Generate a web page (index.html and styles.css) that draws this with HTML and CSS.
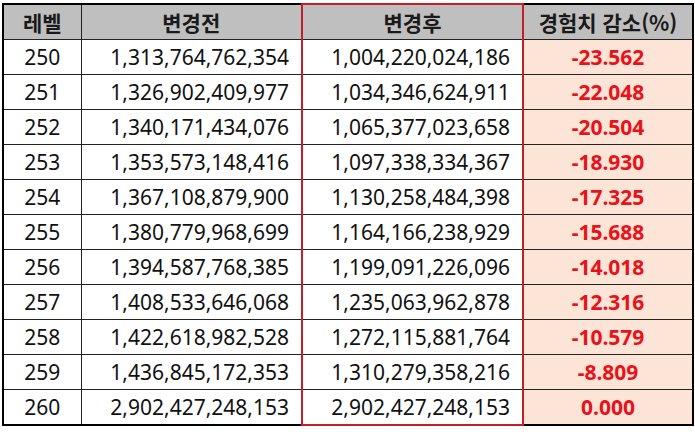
FILE: index.html
```html
<!DOCTYPE html>
<html lang="ko">
<head>
<meta charset="utf-8">
<link rel="stylesheet" href="styles.css">
</head>
<body>
<table class="exp">
  <colgroup>
    <col class="w-lv">
    <col class="w-num">
    <col class="w-num">
    <col class="w-diff">
  </colgroup>
  <thead>
    <tr>
      <th class="c-lv">레벨</th>
      <th class="c-before">변경전</th>
      <th class="c-after">변경후</th>
      <th class="c-diff">경험치 감소(%)</th>
    </tr>
  </thead>
  <tbody>
    <tr><td class="c-lv">250</td><td class="c-before">1,313,764,762,354</td><td class="c-after">1,004,220,024,186</td><td class="c-diff">-23.562</td></tr>
    <tr><td class="c-lv">251</td><td class="c-before">1,326,902,409,977</td><td class="c-after">1,034,346,624,911</td><td class="c-diff">-22.048</td></tr>
    <tr><td class="c-lv">252</td><td class="c-before">1,340,171,434,076</td><td class="c-after">1,065,377,023,658</td><td class="c-diff">-20.504</td></tr>
    <tr><td class="c-lv">253</td><td class="c-before">1,353,573,148,416</td><td class="c-after">1,097,338,334,367</td><td class="c-diff">-18.930</td></tr>
    <tr><td class="c-lv">254</td><td class="c-before">1,367,108,879,900</td><td class="c-after">1,130,258,484,398</td><td class="c-diff">-17.325</td></tr>
    <tr><td class="c-lv">255</td><td class="c-before">1,380,779,968,699</td><td class="c-after">1,164,166,238,929</td><td class="c-diff">-15.688</td></tr>
    <tr><td class="c-lv">256</td><td class="c-before">1,394,587,768,385</td><td class="c-after">1,199,091,226,096</td><td class="c-diff">-14.018</td></tr>
    <tr><td class="c-lv">257</td><td class="c-before">1,408,533,646,068</td><td class="c-after">1,235,063,962,878</td><td class="c-diff">-12.316</td></tr>
    <tr><td class="c-lv">258</td><td class="c-before">1,422,618,982,528</td><td class="c-after">1,272,115,881,764</td><td class="c-diff">-10.579</td></tr>
    <tr><td class="c-lv">259</td><td class="c-before">1,436,845,172,353</td><td class="c-after">1,310,279,358,216</td><td class="c-diff">-8.809</td></tr>
    <tr class="last"><td class="c-lv">260</td><td class="c-before">2,902,427,248,153</td><td class="c-after">2,902,427,248,153</td><td class="c-diff">0.000</td></tr>
  </tbody>
</table>
</body>
</html>
```
FILE: styles.css
```css
html, body {
  margin: 0;
  padding: 0;
  background: #ffffff;
}

body {
  padding: 3px 0 0 2px;
}

.exp {
  border-collapse: collapse;
  border: 2px solid #000;
  width: 690px;
  table-layout: fixed;
  font-family: "Noto Sans", "Noto Sans CJK KR", sans-serif;
  font-size: 21px;
  color: #111;
}

.w-lv { width: 78px; }
.w-num { width: 221px; }
.w-diff { width: 170px; }

.exp th,
.exp td {
  border: 1px solid #222;
  height: 34px;
  padding: 0 12px;
  line-height: 1;
  white-space: nowrap;
  overflow: visible;
}

.exp th {
  background: #bfbfbf;
  font-family: "Noto Sans CJK KR", "Noto Sans", sans-serif;
  font-weight: 700;
  font-size: 21px;
  text-align: center;
  color: #1a1a1a;
  border-bottom: 1px solid #222;
}

.exp td.c-lv {
  text-align: center;
}

.exp td.c-before,
.exp td.c-after {
  text-align: right;
}

.exp .c-after {
  border-left: 2px solid #c41e26;
  border-right: 2px solid #c41e26;
}

.exp th.c-after {
  border-top: 2px solid #c41e26;
}

.exp tr.last td.c-after {
  border-bottom: 2px solid #c41e26;
}

.exp td.c-diff {
  text-align: center;
  background: #fce4d6;
  color: #e8121b;
  font-weight: 700;
}
```
